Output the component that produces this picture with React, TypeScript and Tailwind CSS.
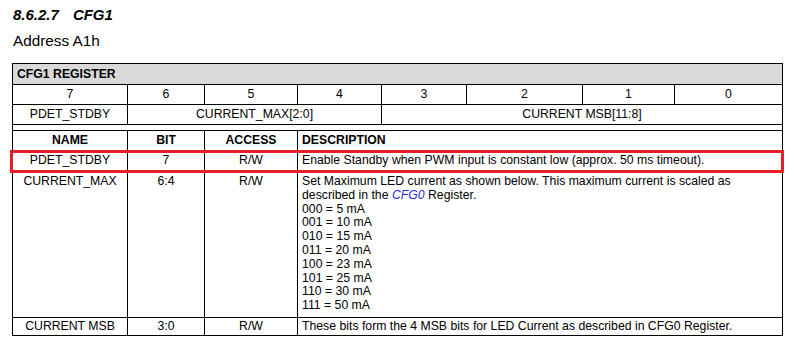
const bits = ['7', '6', '5', '4', '3', '2', '1', '0'];

const currentSteps = [
  '000 = 5 mA',
  '001 = 10 mA',
  '010 = 15 mA',
  '011 = 20 mA',
  '100 = 23 mA',
  '101 = 25 mA',
  '110 = 30 mA',
  '111 = 50 mA',
];

const regCols = 'grid grid-cols-[114px_77px_93px_84px_85px_116px_92px_108px]';
const fieldCols = 'grid grid-cols-[114px_77px_93px_1fr]';

export default function App() {
  return (
    <div className="h-[343px] w-[794px] bg-white font-['Liberation_Sans',Arial,sans-serif] text-black">
      <div className="pl-[13px] pt-[6px]">
        <h4 className="text-[15px] font-bold italic leading-[18px]">
          8.6.2.7<span className="inline-block w-[14px]" />CFG1
        </h4>
        <p className="mt-[8px] text-[15.3px] leading-[18px]">Address A1h</p>
      </div>

      <div className="ml-[12px] mt-[13px] w-[771px] border border-black text-[12.25px]">
        {/* register map */}
        <div className="h-[20px] bg-[#d9d9d9] pl-[4px] font-bold leading-[20px]">CFG1 REGISTER</div>
        <div className={`${regCols} h-[20px] border-t border-black leading-[19px]`}>
          {bits.map((b, i) => (
            <div key={b} className={`text-center ${i > 0 ? 'border-l border-black' : ''}`}>
              {b}
            </div>
          ))}
        </div>
        <div className={`${regCols} h-[20px] border-t border-black leading-[19px]`}>
          <div className="text-center">PDET_STDBY</div>
          <div className="col-span-3 border-l border-black text-center">CURRENT_MAX[2:0]</div>
          <div className="col-span-4 border-l border-black text-center">CURRENT MSB[11:8]</div>
        </div>
        <div className="h-[6px] border-t border-black" />

        {/* field descriptions */}
        <div className={`${fieldCols} h-[20px] border-t border-black font-bold leading-[19px]`}>
          <div className="text-center">NAME</div>
          <div className="border-l border-black text-center">BIT</div>
          <div className="border-l border-black text-center">ACCESS</div>
          <div className="border-l border-black pl-[4px]">DESCRIPTION</div>
        </div>
        <div className={`${fieldCols} relative h-[20px] border-t border-black leading-[19px]`}>
          <div className="text-center">PDET_STDBY</div>
          <div className="border-l border-black text-center">7</div>
          <div className="border-l border-black text-center">R/W</div>
          <div className="border-l border-black pl-[4px]">
            Enable Standby when PWM input is constant low (approx. 50 ms timeout).
          </div>
          <div className="pointer-events-none absolute -bottom-[3px] -left-[3px] -right-[2px] -top-[1px] border-[3px] border-[#e5202a]" />
        </div>
        <div className={`${fieldCols} h-[147px] border-t border-black leading-[13.8px]`}>
          <div className="pt-[4px] text-center">CURRENT_MAX</div>
          <div className="border-l border-black pt-[4px] text-center">6:4</div>
          <div className="border-l border-black pt-[4px] text-center">R/W</div>
          <div className="border-l border-black pl-[4px] pt-[4px]">
            <p>Set Maximum LED current as shown below. This maximum current is scaled as</p>
            <p>
              described in the <span className="italic text-[#2a2ae6]">CFG0</span> Register.
            </p>
            {currentSteps.map((s) => (
              <p key={s}>{s}</p>
            ))}
          </div>
        </div>
        <div className={`${fieldCols} h-[18px] border-t border-black leading-[17px]`}>
          <div className="text-center">CURRENT MSB</div>
          <div className="border-l border-black text-center">3:0</div>
          <div className="border-l border-black text-center">R/W</div>
          <div className="border-l border-black pl-[4px]">
            These bits form the 4 MSB bits for LED Current as described in CFG0 Register.
          </div>
        </div>
      </div>
    </div>
  );
}
